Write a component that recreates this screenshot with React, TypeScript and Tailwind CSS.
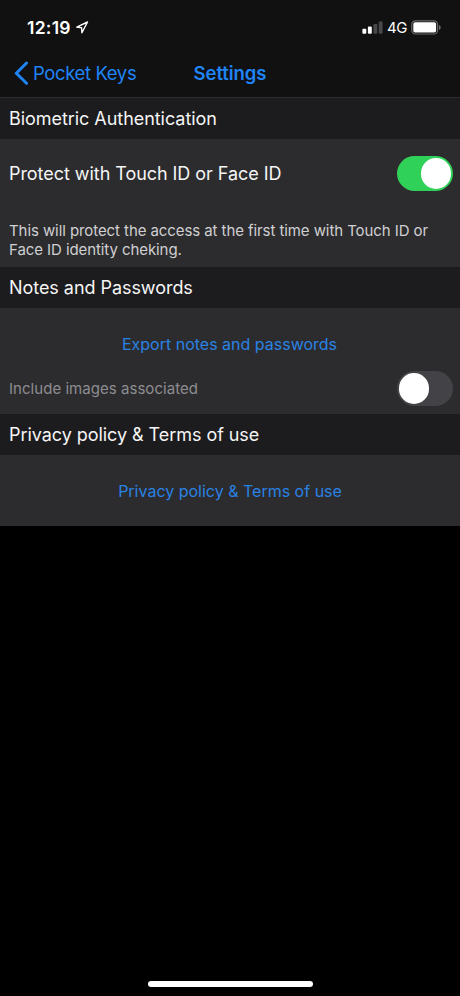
import type { ReactNode } from "react";

function StatusBar() {
  return (
    <div className="flex h-[55px] items-center justify-between pl-[27px] pr-[19px] text-white">
      <div className="flex items-center gap-[5px]">
        <span className="text-[17.5px] font-semibold leading-5 tracking-[0.25px]">12:19</span>
        <svg width="13" height="13" viewBox="0 0 13 13" fill="none" stroke="currentColor" strokeWidth="1.4" strokeLinejoin="round">
          <path d="M11.5 1 .8 6.1l4.800.6.3 5z" />
        </svg>
      </div>
      <div className="flex items-center">
        <svg width="21" height="13" viewBox="0 0 21 13" fill="currentColor">
          <rect x="0.4" y="7.8" width="3.9" height="5" rx="1" />
          <rect x="5.9" y="5.6" width="3.9" height="7.2" rx="1" />
          <rect x="11.4" y="3" width="3.9" height="9.8" rx="1" fill="#48484a" />
          <rect x="16.7" y="0.4" width="3.9" height="12.4" rx="1" fill="#48484a" />
        </svg>
        <span className="ml-1 text-[15px] leading-5 tracking-[-0.4px]">4G</span>
        <svg className="ml-1" width="30" height="15" viewBox="0 0 30 15">
          <rect x="0.8" y="0.8" width="25.8" height="13.2" rx="3.6" fill="none" stroke="#6b6b6d" strokeWidth="1.2" />
          <rect x="2.3" y="2.3" width="22.8" height="10.2" rx="1.8" fill="#fff" />
          <path d="M28 5v5c1-.4 1.7-1.4 1.7-2.5S29 5.4 28 5z" fill="#6b6b6d" />
        </svg>
      </div>
    </div>
  );
}

function NavBar() {
  return (
    <div className="grid h-[42px] grid-cols-[1fr_auto_1fr] items-center text-[18.5px] leading-6 text-[#1f84f5]">
      <button className="flex items-center pb-[6px] pl-[14px]">
        <svg width="15" height="24" viewBox="0 0 15 24" fill="none" stroke="currentColor" strokeWidth="3" strokeLinecap="round" strokeLinejoin="round">
          <path d="M12.5 2 2.3 12.300l10.200 10" />
        </svg>
        <span className="ml-1 whitespace-nowrap tracking-[-0.38px]">Pocket Keys</span>
      </button>
      <h1 className="pb-[6px] font-semibold tracking-[-0.05px]">Settings</h1>
    </div>
  );
}

function SectionHeader({ children }: { children: ReactNode }) {
  return (
    <h2 className="bg-[#1c1c1e] px-[9px] pb-[8px] pt-[8px] text-[18px] leading-[25px] tracking-[-0.05px] text-[#f5f5f5]">
      {children}
    </h2>
  );
}

function Toggle({ on }: { on: boolean }) {
  return (
    <button
      role="switch"
      aria-checked={on}
      className={`flex h-[35px] w-[56.5px] flex-none items-center rounded-full px-[2px] ${on ? "justify-end bg-[#30d158]" : "justify-start bg-[#434347]"}`}
    >
      <span className="size-[30.5px] rounded-full bg-white" />
    </button>
  );
}

export default function App() {
  return (
    <div className="flex h-[996px] w-[460px] flex-col overflow-hidden bg-black font-['Inter','Liberation_Sans',sans-serif]">
      <header className="h-[98px] border-b border-[#2c2c2e] bg-[#111112]">
        <StatusBar />
        <NavBar />
      </header>

      <main className="flex-1">
        <SectionHeader>Biometric Authentication</SectionHeader>
        <section className="h-[128px] bg-[#2c2c2e] pl-[9px] pr-[7px] pt-[17px]">
          <div className="flex items-center justify-between">
            <span className="text-[18px] leading-6 tracking-[-0.05px] text-[#f5f5f5]">Protect with Touch ID or Face ID</span>
            <Toggle on />
          </div>
          <p className="mt-[31px] whitespace-nowrap text-[15px] leading-[18.5px] tracking-[-0.08px] text-[#d0d0d2]">
            This will protect the access at the first time with Touch ID or
            <br />
            Face ID identity cheking.
          </p>
        </section>

        <SectionHeader>Notes and Passwords</SectionHeader>
        <section className="h-[106px] bg-[#2c2c2e] pl-[9px] pr-[7px] pt-[26px]">
          <button className="block w-full pr-[3px] text-center text-[16px] leading-5 text-[#2a82e4]">Export notes and passwords</button>
          <div className="mt-[17px] flex items-center justify-between">
            <span className="text-[15px] leading-5 tracking-[0.04px] text-[#8d8d92]">Include images associated</span>
            <Toggle on={false} />
          </div>
        </section>

        <SectionHeader>Privacy policy &amp; Terms of use</SectionHeader>
        <section className="h-[71px] bg-[#2c2c2e] px-2 pt-[26px]">
          <button className="block w-full text-center text-[16px] leading-5 text-[#2a82e4]">Privacy policy &amp; Terms of use</button>
        </section>
      </main>

      <footer className="flex justify-center pb-[9px]">
        <div className="h-[6px] w-[165px] rounded-full bg-white" />
      </footer>
    </div>
  );
}
